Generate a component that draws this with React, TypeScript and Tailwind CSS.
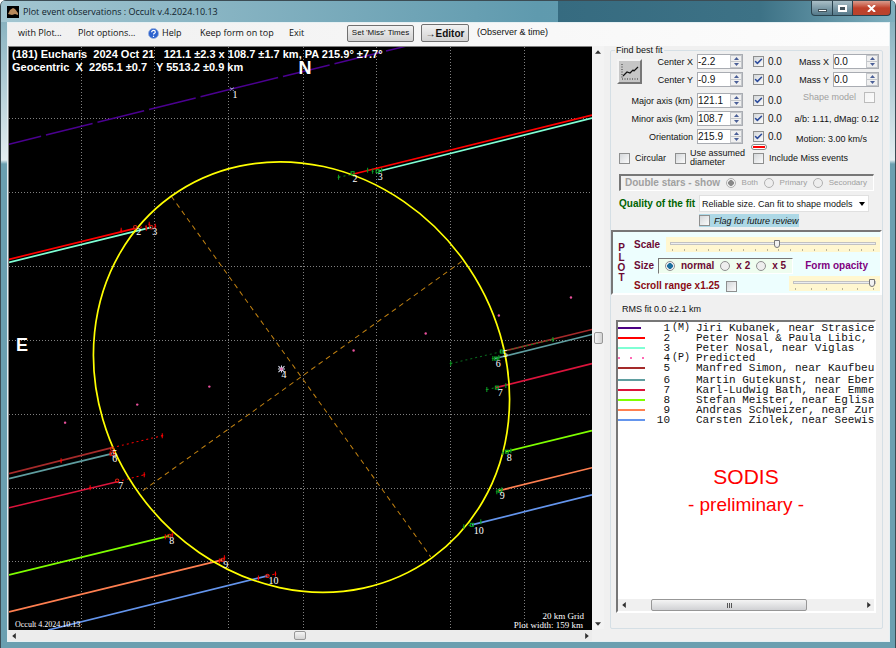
import type { ReactNode } from 'react'
import { Check } from 'lucide-react'

const GRID_X = [81, 154, 228, 302, 375, 449, 523]
const GRID_Y = [118, 192, 266, 339, 413, 487, 560]

// x1, y1, x2, y2, colour
const CHORDS: [number, number, number, number, string][] = [
  [352, 174, 591, 115, '#ff0000'],
  [378, 171, 591, 118, '#7fffd4'],
  [501, 351, 591, 329, '#a52a2a'],
  [494, 358, 591, 334, '#5f9ea0'],
  [495, 387, 591, 363, '#dc143c'],
  [505, 451, 591, 430, '#7fff00'],
  [498, 490, 591, 467, '#ff7f50'],
  [471, 524, 591, 494, '#6495ed'],
  [9, 259, 135, 228, '#ff0000'],
  [9, 262, 151, 227, '#7fffd4'],
  [9, 473, 112, 447, '#a52a2a'],
  [9, 478, 112, 453, '#5f9ea0'],
  [9, 507, 117, 481, '#dc143c'],
  [9, 574, 169, 535, '#7fff00'],
  [9, 611, 222, 559, '#ff7f50'],
  [48, 629, 267, 575, '#6495ed'],
]

// dotted uncertainty runs
const ERRORS: [number, number, number, number, string][] = [
  [338, 177, 352, 174, '#0a8a1e'],
  [450, 363, 501, 351, '#0a6a1e'],
  [501, 351, 552, 339, '#0a8a1e'],
  [486, 389, 495, 387, '#0a8a1e'],
  [463, 526, 471, 524, '#0a8a1e'],
  [112, 447, 162, 435, '#ff0000'],
  [117, 481, 144, 474, '#ff0000'],
  [135, 228, 150, 225, '#ff0000'],
  [267, 575, 275, 573, '#ff0000'],
]

const GREEN_TICKS = [
  [338, 177], [367, 170], [372, 171], [381, 170], [450, 363], [552, 339], [492, 358], [498, 357],
  [486, 389], [505, 385], [502, 452], [510, 450], [496, 491], [501, 489], [463, 526], [480, 521],
]
const RED_TICKS = [
  [121, 230], [149, 224], [146, 228], [155, 226], [61, 460], [162, 435], [110, 453], [114, 452],
  [90, 487], [144, 474], [165, 536], [172, 534], [219, 560], [224, 557], [258, 577], [275, 573],
]
const GREEN_RINGS = [[352, 173], [377, 171], [501, 351], [495, 358], [496, 387], [506, 451], [499, 490], [471, 524]]
const RED_RINGS = [[135, 227], [151, 227], [112, 448], [112, 453], [117, 480], [169, 535], [222, 559], [267, 575]]
const PREDICTED = [[65, 422], [137, 404], [209, 386], [353, 350], [425, 333], [498, 315], [570, 297]]

const LABELS: [number, number, string][] = [
  [232, 98, '1'], [352, 182, '2'], [377, 180, '3'], [136, 235, '2'], [152, 235, '3'], [502, 356, '5'],
  [495, 366, '6'], [497, 395, '7'], [506, 460, '8'], [499, 498, '9'], [473, 533, '10'], [281, 377, '4'],
  [112, 456, '5'], [112, 461, '6'], [118, 488, '7'], [169, 543, '8'], [223, 567, '9'], [268, 583, '10'],
]

function Plot() {
  return (
    <svg viewBox="9 47 582 582" className="block w-full bg-black" role="img" aria-label="Occultation chords">
      <g stroke="#808080" strokeDasharray="1 2" shapeRendering="crispEdges">
        {GRID_X.map((x) => <line key={x} x1={x + 0.5} x2={x + 0.5} y1={47} y2={629} />)}
        {GRID_Y.map((y) => <line key={y} x1={9} x2={591} y1={y + 0.5} y2={y + 0.5} />)}
      </g>

      <g stroke="#4b0090" strokeWidth={1.5}>
        <line x1={9} y1={144} x2={231} y2={89} strokeDasharray="48 5" strokeDashoffset={15} />
        <line x1={231} y1={89} x2={406} y2={46} strokeDasharray="48 5" />
      </g>
      <g stroke="#c08010" strokeDasharray="5 4">
        <line x1={171} y1={196} x2={430} y2={556} />
        <line x1={461} y1={261} x2={141} y2={491} />
      </g>
      {CHORDS.map(([x1, y1, x2, y2, c], i) => (
        <line key={i} x1={x1} y1={y1} x2={x2} y2={y2} stroke={c} strokeWidth={1.7} />
      ))}
      {ERRORS.map(([x1, y1, x2, y2, c], i) => (
        <line key={i} x1={x1} y1={y1} x2={x2} y2={y2} stroke={c} strokeDasharray="2 3" />
      ))}
      <ellipse
        cx={301} cy={376.5} rx={199.5} ry={222.5} transform="rotate(-35.9 301 376.5)"
        fill="none" stroke="#ffff00" strokeWidth={1.7}
      />

      {GREEN_TICKS.map(([x, y], i) => (
        <path key={i} d={`M${x} ${y - 2.5}v5M${x - 1} ${y}h2`} stroke="#0c9c22" />
      ))}
      {RED_TICKS.map(([x, y], i) => (
        <path key={i} d={`M${x} ${y - 2.5}v5M${x - 1} ${y}h2`} stroke="#ff0000" />
      ))}
      {GREEN_RINGS.map(([x, y], i) => (
        <rect key={i} x={x - 1.5} y={y - 1.5} width={3} height={3} fill="none" stroke="#0cb428" />
      ))}
      {RED_RINGS.map(([x, y], i) => (
        <circle key={i} cx={x} cy={y} r={1.7} fill="none" stroke="#e02010" />
      ))}
      {PREDICTED.map(([x, y], i) => <circle key={i} cx={x} cy={y} r={1.2} fill="#e8509c" />)}

      <path d="M229.500 87.500l4 3M233.500 87.500l-4 3" stroke="#9a94c8" />
      <path d="M281 365v7M277.500 368.500h7M278 365.500l6 6M284 365.500l-6 6" stroke="#dfe4f4" />
      <circle cx={281} cy={368.500} r={1.5} fill="#e070b0" />

      <g fill="#ffffff" className="font-['Liberation_Serif'] text-[10px]">
        {LABELS.map(([x, y, t], i) => <text key={i} x={x} y={y}>{t}</text>)}
        <text x={15} y={626} className="text-[8px]">Occult 4.2024.10.13</text>
        <text x={583} y={618} textAnchor="end" className="text-[9px]">20 km Grid</text>
        <text x={582} y={627} textAnchor="end" className="text-[9px]">Plot width: 159 km</text>
      </g>
      <g fill="#ffffff" className="font-['Liberation_Sans'] text-[11px] font-bold">
        <text x={12} y={58}>{'(181) Eucharis\u00a0 2024 Oct 21\u00a0\u00a0 121.1 ±2.3 x 108.7 ±1.7 km, PA 215.9° ±7.7°'}</text>
        <text x={12} y={71}>{'Geocentric\u00a0 X\u00a0 2265.1 ±0.7\u00a0\u00a0 Y 5513.2 ±0.9 km'}</text>
        <text x={298} y={74} className="text-[18px]">N</text>
        <text x={16} y={350} className="text-[18px]">E</text>
      </g>
    </svg>
  )
}

function Tick({ label, checked, disabled }: { label: string; checked?: boolean; disabled?: boolean }) {
  return (
    <span className="relative block size-[11px] shrink-0">
      <input
        type="checkbox"
        aria-label={label}
        defaultChecked={checked}
        disabled={disabled}
        className="peer block size-[11px] appearance-none border border-[#8e8f8f] bg-linear-to-br from-[#d4d7da] to-[#fbfbfb] disabled:border-[#bcbcbc] disabled:from-[#f4f4f4]"
      />
      <Check className="pointer-events-none absolute inset-px hidden size-[9px] text-[#2b4a9b] peer-checked:block" strokeWidth={4} />
    </span>
  )
}

function Spinner({ label, value }: { label: string; value: string }) {
  return (
    <span className="flex h-[15px] w-[46px] shrink-0 border border-[#a9acb2] bg-white">
      <input aria-label={label} defaultValue={value} className="w-0 flex-1 bg-transparent text-[10px] leading-none outline-none" />
      <span className="flex w-3 flex-col bg-[#f0f0f0]">
        <button aria-label={`${label} up`} className="flex flex-1 items-center justify-center border border-[#c4c7cb]">
          <svg viewBox="0 0 5 3" className="h-[3px] w-[5px]"><path d="M0 3L2.500 0L5 3z" fill="#4a5f97" /></svg>
        </button>
        <button aria-label={`${label} down`} className="flex flex-1 items-center justify-center border border-t-0 border-[#c4c7cb]">
          <svg viewBox="0 0 5 3" className="h-[3px] w-[5px]"><path d="M0 0L2.500 3L5 0z" fill="#4a5f97" /></svg>
        </button>
      </span>
    </span>
  )
}

function FitRow({ label, value }: { label: string; value: string }) {
  return (
    <div className="flex h-[15px] items-center justify-end">
      <span className="mr-1 whitespace-nowrap">{label}</span>
      <Spinner label={label} value={value} />
      <label className="ml-[10px] flex w-8 items-center gap-1 text-[10px]">
        <Tick label={`Solve ${label}`} checked />
        0.0
      </label>
    </div>
  )
}

function Option({ name, label, checked, disabled }: { name: string; label: string; checked?: boolean; disabled?: boolean }) {
  return (
    <label className="flex items-center gap-[6px] whitespace-nowrap">
      <input
        type="radio"
        name={name}
        defaultChecked={checked}
        disabled={disabled}
        className="size-[10px] appearance-none rounded-full border border-[#8e8f8f] bg-[#eeeeee] checked:bg-radial checked:from-[#1c6f9e] checked:from-45% checked:to-[#f4f4f4] checked:to-55% disabled:border-[#b0b0b0] disabled:checked:from-[#8a8a8a]"
      />
      {label}
    </label>
  )
}

function Slider({ label, value, ticks }: { label: string; value: number; ticks: number }) {
  return (
    <div className="bg-[#fff7d0] px-1 pt-[2px] pb-px">
      <input
        type="range"
        aria-label={label}
        defaultValue={value}
        className="block h-2 w-full appearance-none bg-transparent [&::-webkit-slider-runnable-track]:h-[3px] [&::-webkit-slider-runnable-track]:border [&::-webkit-slider-runnable-track]:border-[#c2c2c2] [&::-webkit-slider-runnable-track]:bg-[#eceef0] [&::-webkit-slider-thumb]:-mt-[3px] [&::-webkit-slider-thumb]:h-2 [&::-webkit-slider-thumb]:w-[6px] [&::-webkit-slider-thumb]:appearance-none [&::-webkit-slider-thumb]:rounded-b-sm [&::-webkit-slider-thumb]:border [&::-webkit-slider-thumb]:border-[#777777] [&::-webkit-slider-thumb]:bg-[#f2f2f2]"
      />
      <div className="mt-[2px] flex justify-between px-[2px]">
        {Array.from({ length: ticks }, (_, i) => <span key={i} className="h-[2px] w-px bg-[#b9b49a]" />)}
      </div>
    </div>
  )
}

const ARROWS = {
  up: 'M0 4L2.500 1L5 4z',
  down: 'M0 1L2.500 4L5 1z',
  left: 'M4 0L1 2.500L4 5z',
  right: 'M1 0L4 2.500L1 5z',
}

function Arrow({ dir }: { dir: keyof typeof ARROWS }) {
  return (
    <button aria-label={`Scroll ${dir}`} className="flex size-[11px] shrink-0 items-center justify-center">
      <svg viewBox="0 0 5 5" className="size-[6px]"><path d={ARROWS[dir]} fill="#303030" /></svg>
    </button>
  )
}

const OBSERVERS: { n: string; tag?: string; name: string; line: string }[] = [
  { n: '1', tag: '(M)', name: 'Jiri Kubanek, near Strasice', line: 'w-[23px] border-[#4b0082]' },
  { n: '2', name: 'Peter Nosal & Paula Libic, near Viglas', line: 'w-[27px] border-[#ff0000]' },
  { n: '3', name: 'Peter Nosal, near Viglas', line: 'w-[27px] border-[#7fffd4]' },
  { n: '4', tag: '(P)', name: 'Predicted', line: '' },
  { n: '5', name: 'Manfred Simon, near Kaufbeuren', line: 'w-[27px] border-[#a52a2a]' },
  { n: '6', name: 'Martin Gutekunst, near Ebersberg', line: 'w-[27px] border-[#5f9ea0]' },
  { n: '7', name: 'Karl-Ludwig Bath, near Emmendingen', line: 'w-[27px] border-[#dc143c]' },
  { n: '8', name: 'Stefan Meister, near Eglisau', line: 'w-[27px] border-[#7fff00]' },
  { n: '9', name: 'Andreas Schweizer, near Zurich', line: 'w-[27px] border-[#ff7f50]' },
  { n: '10', name: 'Carsten Ziolek, near Seewis', line: 'w-[27px] border-[#6495ed]' },
]

function ObserverRows({ rows }: { rows: typeof OBSERVERS }) {
  return (
    <ul>
      {rows.map((o) => (
        <li key={o.n} className="flex h-[10px] items-center whitespace-pre">
          <span className="w-[27px] shrink-0">
            {o.line ? (
              <span className={`block border-t-2 ${o.line}`} />
            ) : (
              <svg viewBox="0 0 27 2" className="h-[2px] w-[27px]"><path d="M0 1h2M12 1h2M24 1h2" stroke="#ff69b4" strokeWidth={2} /></svg>
            )}
          </span>
          <span className="w-[25px] shrink-0 text-right">{o.n}</span>
          <span className="w-[26px] shrink-0 pl-[2px] text-[10px]">{o.tag}</span>
          <span>{o.name}</span>
        </li>
      ))}
    </ul>
  )
}

function BestFit() {
  return (
    <div className="flex justify-between pr-[3px] pl-[6px]">
      <div className="flex">
        <button aria-label="Show fit chart" className="mt-[5px] -mr-6 size-[25px] shrink-0 border-2 border-t-[#f4f4f4] border-r-[#777777] border-b-[#777777] border-l-[#f4f4f4] bg-[#c6c6c6]">
          <svg viewBox="0 0 21 21" fill="none">
            <path d="M3 3v15h16" stroke="#333333" strokeDasharray="1 1.5" />
            <path d="M4 15l4-4 3 1 3-3 1 1 4-4" stroke="#111111" strokeWidth={1.2} />
          </svg>
        </button>
        <div className="flex w-[167px] flex-col gap-[3px]">
          <FitRow label="Center X" value="-2.2" />
          <FitRow label="Center Y" value="-0.9" />
          <div className="mt-[3px] flex flex-col gap-[3px]">
            <FitRow label="Major axis (km)" value="121.1" />
            <FitRow label="Minor axis (km)" value="108.7" />
            <FitRow label="Orientation" value="215.9" />
          </div>
          <span className="-mt-[3px] mr-[18px] block w-4 self-end rounded-sm border border-[#888888] bg-white p-px">
            <span className="block h-[2px] bg-[#ff0000]" />
          </span>
        </div>
      </div>
      <div className="flex flex-col items-end gap-[3px]">
        <div className="flex items-center gap-1">Mass X<Spinner label="Mass X" value="0.0" /></div>
        <div className="flex items-center gap-1">Mass Y<Spinner label="Mass Y" value="0.0" /></div>
        <label className="mt-px mr-1 flex h-3 items-center gap-2 text-[#a0a0a0]">
          Shape model
          <Tick label="Shape model" disabled />
        </label>
        <span className="mt-[7px] leading-3">a/b: 1.11, dMag: 0.12</span>
        <span className="mt-[5px] mr-3 leading-3">Motion: 3.00 km/s</span>
      </div>
    </div>
  )
}

function PlotControls() {
  return (
    <div className="mt-[3px] flex h-[65px] border-2 border-t-[#777777] border-r-white border-b-white border-l-[#777777] bg-[#edfefe] font-bold text-[#6b0a34]">
      <div className="flex w-[17px] flex-col items-center justify-center text-[10px] leading-[10px]">
        <span>P</span><span>L</span><span>O</span><span>T</span>
      </div>
      <div className="flex flex-1 flex-col gap-[6px] pt-[5px] pl-1">
        <div className="flex items-center gap-[6px]">
          <span className="text-[10px]">Scale</span>
          <div className="flex-1"><Slider label="Scale" value={52} ticks={18} /></div>
        </div>
        <div className="flex items-center text-[10px]">
          <span className="w-6">Size</span>
          <div className="flex h-4 items-center gap-[6px] border border-t-[#777777] border-r-white border-b-white border-l-[#777777] bg-[#effdef] px-[6px]">
            <Option name="size" label="normal" checked />
            <Option name="size" label="x 2" />
            <Option name="size" label="x 5" />
          </div>
          <span className="flex-1 text-center text-[#800080]">Form opacity</span>
        </div>
        <div className="flex items-start justify-between">
          <label className="flex items-center gap-[6px] text-[10px] text-[#8b0a14]">
            Scroll range x1.25
            <Tick label="Scroll range x1.25" />
          </label>
          <div className="-mt-1 w-[91px]"><Slider label="Form opacity" value={100} ticks={6} /></div>
        </div>
      </div>
    </div>
  )
}

function SidePanel() {
  return (
    <fieldset className="mr-[6px] ml-[6px] flex w-[273px] min-w-0 shrink-0 flex-col rounded-xs border border-[#d5dfe5] pb-[15px] text-[9px] leading-3 text-[#111111]">
      <legend className="ml-1 px-px leading-[8px]">Find best fit</legend>
      <BestFit />

      <div className="flex h-4 items-center pl-2">
        <label className="flex w-14 items-center gap-[5px]"><Tick label="Circular" />Circular</label>
        <label className="flex w-[78px] items-center gap-1 leading-[9px]">
          <Tick label="Use assumed diameter" />
          <span>Use assumed<br />diameter</span>
        </label>
        <label className="flex items-center gap-[5px] whitespace-nowrap"><Tick label="Include Miss events" />Include Miss events</label>
      </div>

      <div className="mt-2 mr-2 ml-2 flex h-[17px] items-center justify-between border-t-2 border-r border-b border-l-2 border-t-[#777777] border-r-white border-b-white border-l-[#777777] pr-[6px] pl-1 text-[8px] text-[#a0a0a0]">
        <span className="text-[10px] font-bold">Double stars - show</span>
        <Option name="stars" label="Both" checked disabled />
        <Option name="stars" label="Primary" disabled />
        <Option name="stars" label="Secondary" disabled />
      </div>

      <div className="mt-1 mr-[13px] ml-2 flex items-center">
        <label htmlFor="quality" className="w-20 shrink-0 text-[10px] font-bold whitespace-nowrap text-[#006400]">Quality of the fit</label>
        <div className="relative flex-1">
          <select id="quality" className="block h-[17px] w-full appearance-none border border-[#e0e0e0] bg-white pl-[2px] text-[9px] outline-none">
            <option>Reliable size. Can fit to shape models</option>
          </select>
          <svg viewBox="0 0 6 4" className="pointer-events-none absolute top-[7px] right-1 h-1 w-[6px]"><path d="M0 0h6L3 4z" fill="#000000" /></svg>
        </div>
      </div>
      <label className="mt-[2px] ml-[88px] flex h-[13px] w-[100px] items-center gap-1 bg-[#add8e6] whitespace-nowrap italic">
        <Tick label="Flag for future review" />
        Flag for future review
      </label>

      <PlotControls />

      <p className="mt-2 ml-[11px]">RMS fit 0.0 ±2.1 km</p>

      <div className="mt-[5px] mr-[6px] ml-[5px] flex min-w-0 flex-1 flex-col border-2 border-t-[#777777] border-r-white border-b-white border-l-[#777777] bg-white">
        <div className="flex min-w-0 flex-1 flex-col gap-[2px] overflow-hidden pt-px font-['Liberation_Mono'] text-[11px] leading-[10px]">
          <ObserverRows rows={OBSERVERS.slice(0, 5)} />
          <ObserverRows rows={OBSERVERS.slice(5)} />
          <div className="mt-9 text-center font-['Liberation_Sans'] text-[#ff0000]">
            <p className="text-[21px] leading-7">SODIS</p>
            <p className="text-[19px] leading-7">- preliminary -</p>
          </div>
        </div>
        <div className="flex h-3 items-center bg-[#f0f0f0]">
          <Arrow dir="left" />
          <div className="flex flex-1 pr-[56px] pl-[22px]">
            <div className="flex h-3 flex-1 items-center justify-center gap-px rounded-xs border border-[#979797] bg-linear-to-b from-[#f4f4f4] to-[#d0d1d4]">
              <span className="h-[5px] w-px bg-[#555555]" />
              <span className="h-[5px] w-px bg-[#555555]" />
              <span className="h-[5px] w-px bg-[#555555]" />
            </div>
          </div>
          <Arrow dir="right" />
        </div>
      </div>
    </fieldset>
  )
}

function CaptionButton({ label, className, children }: { label: string; className: string; children: ReactNode }) {
  return (
    <button aria-label={label} className={`flex h-[15px] items-center justify-center border border-t-0 border-[#29424e] ${className}`}>
      {children}
    </button>
  )
}

function TitleBar() {
  return (
    <header className="flex h-[22px] items-center border-t border-[#3c4c54] bg-linear-to-r from-[#a3c6d1] via-[#5f9aae] via-60% to-[#6a9fb0] pl-[6px]">
      <svg viewBox="0 0 12 12" className="size-3 bg-black"><path d="M1 8l2-4 3-2 2 1 3 4v2l-3-1-3 1z" fill="#b98a5c" /></svg>
      <h1 className="ml-1 font-['Open_Sans'] text-[9px] text-[#10222b]">Plot event observations : Occult v.4.2024.10.13</h1>
      <div className="ml-auto flex h-full w-[38%] items-start justify-end bg-linear-to-r from-[#366b80] via-[#3d7286] via-60% to-[#7fb0bf] pr-1">
        <CaptionButton label="Minimize" className="w-[22px] rounded-bl bg-linear-to-b from-[#a9bec6] to-[#54798a]">
          <span className="mt-1 h-[3px] w-[9px] border border-[#44545c] bg-white" />
        </CaptionButton>
        <CaptionButton label="Maximize" className="w-5 border-l-0 bg-linear-to-b from-[#a9bec6] to-[#54798a]">
          <span className="h-[7px] w-[9px] border-2 border-white bg-[#44545c]" />
        </CaptionButton>
        <CaptionButton label="Close" className="w-[38px] rounded-br border-l-0 bg-linear-to-b from-[#d99a8c] via-[#c0402a] to-[#b8442c]">
          <svg viewBox="0 0 9 7" className="h-[7px] w-[9px]"><path d="M1 0l7 7M8 0L1 7" stroke="#ffffff" strokeWidth={2} /></svg>
        </CaptionButton>
      </div>
    </header>
  )
}

function MenuBar() {
  return (
    <nav className="flex h-[23px] items-center bg-linear-to-r from-[#f0f0f0] to-[#fdfdfd] pb-[3px] pl-[10px] font-['Open_Sans'] text-[9px] text-[#111111]">
      <button className="w-[60px] text-left">with Plot...</button>
      <button className="w-[70px] text-left">Plot options...</button>
      <button className="flex w-[52px] items-center gap-[3px]">
        <svg viewBox="0 0 12 12" className="size-[11px]">
          <circle cx="6" cy="6" r="5.500" fill="#2c62cf" stroke="#9db4dc" />
          <path d="M4 4.500c0-2.500 4-2.500 4 0c0 1.300-2 1.300-2 2.700M6 8.500v1.200" stroke="#ffffff" strokeWidth="1.300" fill="none" />
        </svg>
        Help
      </button>
      <button className="w-[89px] text-left">Keep form on top</button>
      <button className="w-[58px] text-left">Exit</button>
      <button className="h-[17px] w-[67px] rounded-xs border border-[#707070] bg-linear-to-b from-[#f2f2f2] to-[#d2d2d2] font-['Liberation_Sans'] text-[8px]">Set 'Miss' Times</button>
      <button className="ml-[7px] h-[18px] w-12 rounded-xs border border-[#707070] bg-linear-to-b from-[#f2f2f2] to-[#d2d2d2] font-['Liberation_Sans'] text-[10px] font-bold whitespace-nowrap">→Editor</button>
      <span className="ml-2 font-['Liberation_Sans']">(Observer &amp; time)</span>
    </nav>
  )
}

export default function App() {
  return (
    <div className="flex min-h-screen flex-col overflow-hidden rounded-t-md border-x border-b border-[#3c4c54] bg-[linear-gradient(to_bottom,#7aa9b8_0,#e4eef1_160px,#6a9fb0_164px)] font-['Liberation_Sans']">
      <TitleBar />
      <main className="mr-[5px] mb-[6px] ml-[6px] flex flex-1 flex-col border border-[#e6f0f3] bg-[#f0f0f0]">
        <MenuBar />
        <div className="flex flex-1">
          <div className="flex min-w-0 flex-1 flex-col">
            <div className="border-t border-l border-[#808080]"><Plot /></div>
            <div className="flex h-[11px] items-center bg-[#ececec]">
              <Arrow dir="left" />
              <div className="flex flex-1 justify-center">
                <div className="h-[9px] w-3 rounded-xs border border-[#979797] bg-linear-to-b from-[#f4f4f4] to-[#d4d4d4]" />
              </div>
              <Arrow dir="right" />
            </div>
          </div>
          <div className="mb-3 flex w-3 shrink-0 flex-col items-center bg-[#f3f3f3]">
            <Arrow dir="up" />
            <div className="flex flex-1 flex-col justify-center">
              <div className="h-3 w-[9px] rounded-xs border border-[#979797] bg-linear-to-r from-[#f4f4f4] to-[#d4d4d4]" />
            </div>
            <Arrow dir="down" />
          </div>
          <div className="flex w-[285px] shrink-0 pb-3"><SidePanel /></div>
        </div>
      </main>
    </div>
  )
}
